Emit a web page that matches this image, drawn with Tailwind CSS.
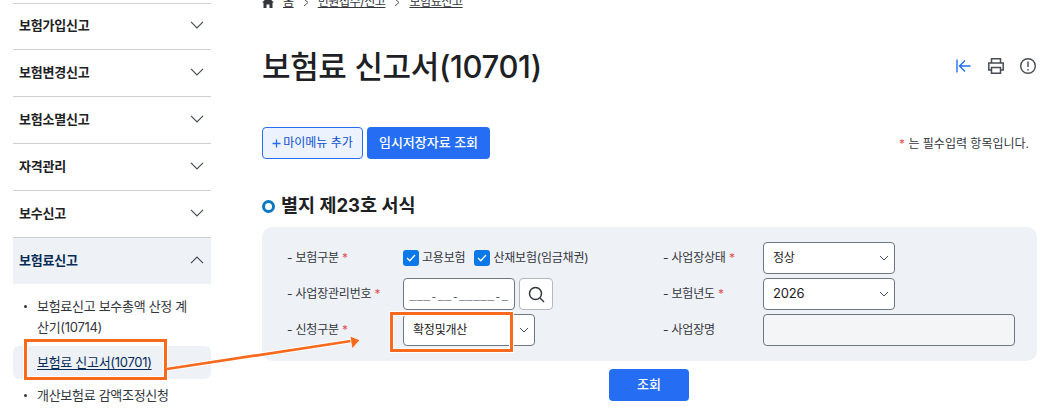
<!DOCTYPE html>
<html lang="ko">
<head>
    <meta charset="UTF-8">
    <title>보험료 신고서(10701)</title>
    <script src="https://cdn.jsdelivr.net/npm/@tailwindcss/browser@4"></script>
</head>
<body class="relative h-[408px] w-[1051px] overflow-hidden bg-white font-['Inter','Noto_Sans_CJK_KR',sans-serif] text-[#1e2124]">
    <div class="flex h-[408px] items-start">
        <!-- Sidebar -->
        <aside class="ml-[13px] mt-[3px] w-[198px] shrink-0 text-[13px] font-bold tracking-[-.2px]">
            <div class="flex h-[46px] items-center justify-between border-t-[1px] border-[#cdd1d5] pl-[6px] pr-[7px]">
                <span class="mb-[1px]">보험가입신고</span>
                <svg class="mb-[3px]" width="14" height="8" viewBox="0 0 14 8" fill="none" stroke="#464c53" stroke-width="1.2"><path d="M1 .8 7 7 13 .8"/></svg>
            </div>
            <div class="flex h-[47px] items-center justify-between border-t-[1px] border-[#cdd1d5] pl-[6px] pr-[7px]">
                <span class="mb-[1px]">보험변경신고</span>
                <svg class="mb-[3px]" width="14" height="8" viewBox="0 0 14 8" fill="none" stroke="#464c53" stroke-width="1.2"><path d="M1 .8 7 7 13 .8"/></svg>
            </div>
            <div class="flex h-[47px] items-center justify-between border-t-[1px] border-[#cdd1d5] pl-[6px] pr-[7px]">
                <span class="mb-[1px]">보험소멸신고</span>
                <svg class="mb-[3px]" width="14" height="8" viewBox="0 0 14 8" fill="none" stroke="#464c53" stroke-width="1.2"><path d="M1 .8 7 7 13 .8"/></svg>
            </div>
            <div class="flex h-[47px] items-center justify-between border-t-[1px] border-[#cdd1d5] pl-[6px] pr-[7px]">
                <span class="mb-[1px]">자격관리</span>
                <svg class="mb-[3px]" width="14" height="8" viewBox="0 0 14 8" fill="none" stroke="#464c53" stroke-width="1.2"><path d="M1 .8 7 7 13 .8"/></svg>
            </div>
            <div class="flex h-[47px] items-center justify-between border-t-[1px] border-[#cdd1d5] pl-[6px] pr-[7px]">
                <span class="mb-[1px]">보수신고</span>
                <svg class="mb-[3px]" width="14" height="8" viewBox="0 0 14 8" fill="none" stroke="#464c53" stroke-width="1.2"><path d="M1 .8 7 7 13 .8"/></svg>
            </div>
            <div class="flex h-[47px] items-center justify-between border-t-[1px] border-[#cdd1d5] bg-[#eef2f7] pl-[6px] pr-[7px] text-[#052b57]">
                <span class="mb-[1px]">보험료신고</span>
                <svg class="mb-[3px]" width="14" height="8" viewBox="0 0 14 8" fill="none" stroke="#464c53" stroke-width="1.2"><path d="M1 7.2 7 1 13 7.2"/></svg>
            </div>
            <ul class="mt-[12px] text-[13px] font-normal leading-[21px] tracking-[-.3px] text-[#33363d]">
                <li class="relative break-all pl-[24px] pr-[16px]">
                    <span class="absolute left-[11px] top-[9px] size-[3px] rounded-full bg-[#33363d]"></span>
                    보험료신고 보수총액 산정 계산기(10714)
                </li>
                <li class="mt-[8px] flex h-[33px] items-center rounded-[6px] bg-[#eef2f7] pl-[24px] text-[#052b57] underline underline-offset-2">보험료 신고서(10701)</li>
                <li class="relative mt-[6px] pl-[24px]">
                    <span class="absolute left-[11px] top-[9px] size-[3px] rounded-full bg-[#33363d]"></span>
                    개산보험료 감액조정신청
                </li>
            </ul>
        </aside>

        <!-- Main -->
        <main class="ml-[51px] w-[775px] shrink-0">
            <nav class="-mt-[6px] flex h-[16px] items-center text-[12px] tracking-[-.4px] text-[#33363d]">
                <svg width="12" height="11" viewBox="0 0 12 11" fill="#33363d"><path d="M6 0 0 5.500h1.500V11h3V7.500h3V11h3V5.500H12z"/></svg>
                <span class="ml-[9px] underline">홈</span>
                <svg class="mx-[9px]" width="6" height="9" viewBox="0 0 6 9" fill="none" stroke="#555" stroke-width="1"><path d="m1 1 4 3.500-4 3.500"/></svg>
                <span class="underline">민원접수/신고</span>
                <svg class="mx-[9px]" width="6" height="9" viewBox="0 0 6 9" fill="none" stroke="#555" stroke-width="1"><path d="m1 1 4 3.500-4 3.500"/></svg>
                <span class="underline">보험료신고</span>
            </nav>

            <div class="mt-[33px] flex h-[48px] items-center justify-between">
                <h1 class="text-[31px] font-medium tracking-[-.35px]">보험료 신고서(10701)</h1>
                <div class="mb-[3px] flex items-center gap-[14px]">
                    <svg width="18" height="18" viewBox="0 0 18 18" fill="none" stroke="#256ef4" stroke-width="1.400"><path d="M2 2.500v13M15.500 9H4.500M10 3.500 4.500 9l5.500 5.500"/></svg>
                    <svg width="18" height="18" viewBox="0 0 18 18" fill="none" stroke="#464c53" stroke-width="1.500"><path d="M4.500 6V1.800h9V6M4.500 13H1.800V6h14.400v7h-2.700"/><path d="M4.500 10.500h9v5.700h-9z"/></svg>
                    <svg width="18" height="18" viewBox="0 0 18 18" fill="none" stroke="#464c53" stroke-width="1.400"><circle cx="9" cy="9" r="7.300"/><path d="M9 4.500v5.500M9 12v1.500"/></svg>
                </div>
            </div>

            <div class="mt-[36px] flex items-end justify-between">
                <div class="flex gap-[4px]">
                    <button class="flex h-[32px] w-[101px] items-center justify-center rounded-[4px] border border-[#256ef4] bg-[#ecf2fe] text-[12px] text-[#0b50d0]">
                        <svg class="mr-[2px]" width="9" height="9" viewBox="0 0 9 9" fill="none" stroke="#256ef4" stroke-width="1.300"><path d="M4.500 .5v8M.5 4.500h8"/></svg>
                        마이메뉴 추가
                    </button>
                    <button class="h-[32px] w-[123px] rounded-[4px] bg-[#256ef4] text-[13px] font-medium text-white">임시저장자료 조회</button>
                </div>
                <p class="mb-[6px] mr-[8px] text-[12px] text-[#33363d]"><span class="text-[#e15252]">*</span> 는 필수입력 항목입니다.</p>
            </div>

            <h2 class="mt-[32px] flex h-[30px] items-center text-[18.500px] font-bold">
                <span class="mr-[6px] size-[13px] rounded-full border-[3.500px] border-[#0b78c4] bg-white"></span>별지 제23호 서식
            </h2>

            <div class="mt-[6px] h-[134px] rounded-[10px] bg-[#eef1f6] pl-[25px] pr-[22px] pt-[15px] text-[12px] tracking-[-.2px] text-[#33363d]">
                <div class="grid grid-cols-[116px_260px_100px_1fr] grid-rows-[32px_32px_32px] items-center gap-y-[4px]">
                    <span>- 보험구분 <span class="text-[#e15252]">*</span></span>
                    <div class="flex items-center">
                        <span class="flex size-[16px] items-center justify-center rounded-[3px] bg-[#0b78e8]">
                            <svg width="10" height="8" viewBox="0 0 10 8" fill="none" stroke="white" stroke-width="1.300"><path d="m1 4 2.800 2.800L9 1"/></svg>
                        </span>
                        <span class="ml-[3px]">고용보험</span>
                        <span class="ml-[9px] flex size-[16px] items-center justify-center rounded-[3px] bg-[#0b78e8]">
                            <svg width="10" height="8" viewBox="0 0 10 8" fill="none" stroke="white" stroke-width="1.300"><path d="m1 4 2.800 2.800L9 1"/></svg>
                        </span>
                        <span class="ml-[3px]">산재보험(임금채권)</span>
                    </div>
                    <span>- 사업장상태 <span class="text-[#e15252]">*</span></span>
                    <div class="flex h-[32px] w-[132px] items-center justify-between rounded-[4px] border border-[#6d7882] bg-white pl-[9px] pr-[5px] text-[#1e2124]">
                        정상
                        <svg width="10" height="6" viewBox="0 0 10 6" fill="none" stroke="#464c53" stroke-width="1"><path d="m1 1 4 4 4-4"/></svg>
                    </div>

                    <span>- 사업장관리번호 <span class="text-[#e15252]">*</span></span>
                    <div class="flex items-center gap-[4px]">
                        <div class="flex h-[32px] w-[112px] items-end justify-center rounded-[4px] border border-[#6d7882] bg-white pb-[5px] font-['Liberation_Mono',monospace] text-[11px] leading-[14px] tracking-[.5px] text-[#464c53]">___-__-_____-_</div>
                        <div class="flex h-[32px] w-[34px] items-center justify-center rounded-[4px] border border-[#b1b8be] bg-white">
                            <svg width="17" height="17" viewBox="0 0 17 17" fill="none" stroke="#33363d" stroke-width="1.500"><circle cx="7.500" cy="7.500" r="6"/><path d="m12 12 4 4"/></svg>
                        </div>
                    </div>
                    <span>- 보험년도 <span class="text-[#e15252]">*</span></span>
                    <div class="flex h-[32px] w-[132px] items-center justify-between rounded-[4px] border border-[#6d7882] bg-white pl-[9px] pr-[5px] text-[13px] text-[#1e2124]">
                        2026
                        <svg width="10" height="6" viewBox="0 0 10 6" fill="none" stroke="#464c53" stroke-width="1"><path d="m1 1 4 4 4-4"/></svg>
                    </div>

                    <span>- 신청구분 <span class="text-[#e15252]">*</span></span>
                    <div class="flex h-[32px] w-[132px] items-center justify-between rounded-[4px] border border-[#6d7882] bg-white pl-[9px] pr-[5px] text-[#1e2124]">
                        확정및개산
                        <svg width="10" height="6" viewBox="0 0 10 6" fill="none" stroke="#464c53" stroke-width="1"><path d="m1 1 4 4 4-4"/></svg>
                    </div>
                    <span>- 사업장명</span>
                    <div class="h-[32px] w-[252px] rounded-[4px] border border-[#6d7882] bg-[#f4f5f6]"></div>
                </div>
            </div>

            <div class="mt-[8px] flex justify-center pr-[1px]">
                <button class="h-[32px] w-[80px] rounded-[4px] bg-[#256ef4] text-[13px] font-medium text-white">조회</button>
            </div>
        </main>
    </div>

    <!-- Annotation overlay -->
    <div class="absolute left-[24px] top-[339px] h-[41px] w-[143px] border-[3px] border-[#f96a1e] shadow-[0_0_0_1px_white,inset_0_0_0_1px_white]"></div>
    <div class="absolute left-[390px] top-[312px] h-[40px] w-[123px] border-[3px] border-[#f96a1e] shadow-[0_0_0_1px_white,inset_0_0_0_1px_white]"></div>
    <svg class="absolute left-0 top-0" width="1051" height="408" fill="none">
        <path d="M167 369 L351 341" stroke="white" stroke-width="4.500"/>
        <path d="M167 369 L351 341" stroke="#f96a1e" stroke-width="2.700"/>
        <path d="M350 336 L360 340 L352 349 Z" fill="#f96a1e" stroke="white" stroke-width=".8"/>
    </svg>
</body>
</html>
